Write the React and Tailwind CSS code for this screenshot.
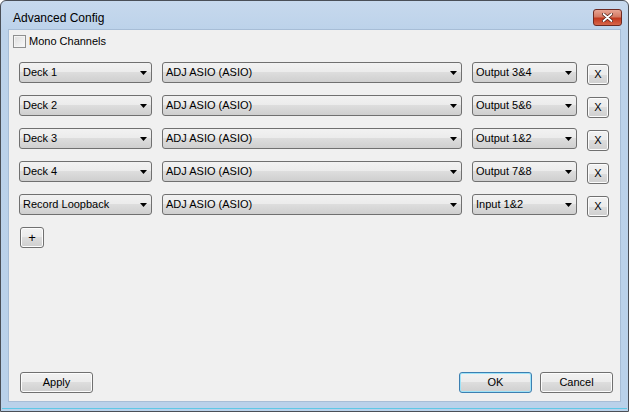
import { useState } from 'react';

const rows = [
  { deck: 'Deck 1', device: 'ADJ ASIO (ASIO)', out: 'Output 3&4' },
  { deck: 'Deck 2', device: 'ADJ ASIO (ASIO)', out: 'Output 5&6' },
  { deck: 'Deck 3', device: 'ADJ ASIO (ASIO)', out: 'Output 1&2' },
  { deck: 'Deck 4', device: 'ADJ ASIO (ASIO)', out: 'Output 7&8' },
  { deck: 'Record Loopback', device: 'ADJ ASIO (ASIO)', out: 'Input 1&2' },
];

const Combo = ({ value, width }) => (
  <div
    className={`${width} h-[21px] flex items-center justify-between rounded-[3px] border border-[#707070] bg-[linear-gradient(#f2f2f2_0%,#ebebeb_50%,#dddddd_50%,#cfcfcf_100%)] pl-[3px] pr-[4px]`}
  >
    <span className="text-[11px] text-black leading-none">{value}</span>
    <svg width="7" height="4" viewBox="0 0 7 4">
      <path d="M0 0h7L3.5 4z" fill="#000" />
    </svg>
  </div>
);

const Button = ({ children, className = '', primary }) => (
  <button
    className={`${className} flex items-center justify-center rounded-[3px] border ${
      primary ? 'border-[#3c7fb1] shadow-[inset_0_0_0_1px_#9fe3f8]' : 'border-[#707070] shadow-[inset_0_0_0_1px_#fcfcfc]'
    } bg-[linear-gradient(#f2f2f2_0%,#ebebeb_50%,#dddddd_50%,#cfcfcf_100%)] text-[11px] text-black leading-none`}
  >
    {children}
  </button>
);

export default function App() {
  const [mono, setMono] = useState(false);

  return (
    <div
      className="w-[629px] h-[412px] flex flex-col border border-[#4a4f57] rounded-t-[6px] bg-[linear-gradient(#c7d9ed_0px,#bcd2ea_30px,#b9d1ea_100%)] overflow-hidden"
      style={{ fontFamily: '"Liberation Sans", Arial, sans-serif' }}
    >
      <div className="h-[28px] flex items-center justify-between pl-[12px] pr-[6px] shrink-0">
        <span className="text-[12px] text-black mt-[6px]">Advanced Config</span>
        <div className="w-[29px] h-[17px] mt-[4px] rounded-[3px] border border-[#6d2a22] bg-[linear-gradient(#e8a493_0%,#d47a64_45%,#c2381e_55%,#d6664a_100%)] flex items-center justify-center">
          <svg width="11" height="9" viewBox="0 0 11 9">
            <path d="M1.5 1l8 7M9.5 1l-8 7" stroke="#4a1a12" strokeWidth="3.2" strokeLinecap="round" />
            <path d="M1.5 1l8 7M9.5 1l-8 7" stroke="#ffffff" strokeWidth="1.8" strokeLinecap="round" />
          </svg>
        </div>
      </div>
      <div className="flex-1 mx-[7px] mb-[6px] border border-[#a7bdd6] bg-[#f0f0f0] flex flex-col relative">
        <label className="flex items-center gap-[3px] mt-[5px] ml-[4px] h-[13px]">
          <span
            onClick={() => setMono(!mono)}
            className="w-[13px] h-[13px] border border-[#8e8f8f] bg-[linear-gradient(135deg,#dcdcdc,#fafafa)] shadow-[inset_0_0_0_1px_#f4f4f4]"
          />
          <span className="text-[11px] text-black leading-none">Mono Channels</span>
        </label>
        <div className="flex flex-col gap-[12px] mt-[14px] ml-[10px]">
          {rows.map((r) => (
            <div key={r.deck} className="flex items-start h-[21px]">
              <Combo value={r.deck} width="w-[133px]" />
              <div className="ml-[10px]">
                <Combo value={r.device} width="w-[300px]" />
              </div>
              <div className="ml-[10px]">
                <Combo value={r.out} width="w-[105px]" />
              </div>
              <Button className="ml-[10px] mt-[2px] w-[22px] h-[21px] shrink-0">X</Button>
            </div>
          ))}
        </div>
        <Button className="ml-[11px] mt-[12px] w-[24px] h-[21px] text-[13px]">+</Button>
        <div className="mt-auto mb-[8px] flex items-center">
          <Button className="ml-[11px] w-[73px] h-[21px]">Apply</Button>
          <Button primary className="ml-auto w-[73px] h-[21px]">OK</Button>
          <Button className="ml-[8px] mr-[7px] w-[73px] h-[21px]">Cancel</Button>
        </div>
      </div>
      <div className="h-[1px] mx-[1px] mb-[2px] bg-[#5ec8e6] shrink-0" />
    </div>
  );
}
